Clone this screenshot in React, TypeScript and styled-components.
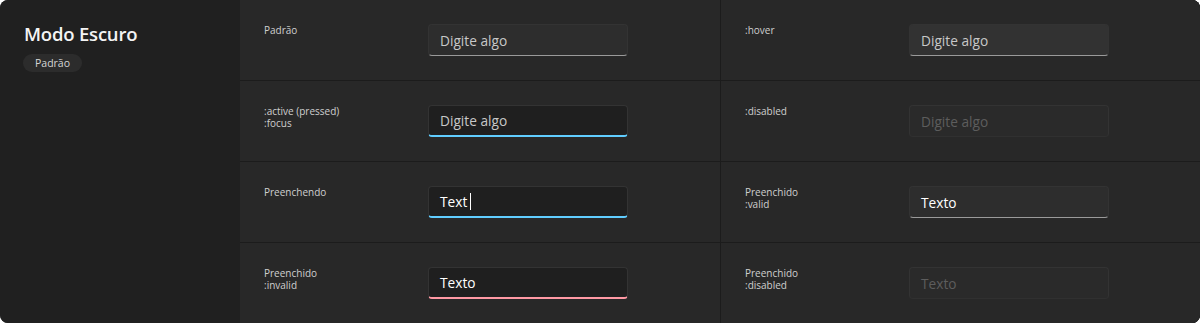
import React from 'react';
import styled, { createGlobalStyle, css } from 'styled-components';

type FieldState = 'rest' | 'hover' | 'focus' | 'disabled' | 'invalid' | 'valid';

interface Cell {
  label: string[];
  state: FieldState;
  value?: string;
  caret?: boolean;
}

const rows: Cell[][] = [
  [
    { label: ['Padrão'], state: 'rest' },
    { label: [':hover'], state: 'hover' },
  ],
  [
    { label: [':active (pressed)', ':focus'], state: 'focus' },
    { label: [':disabled'], state: 'disabled' },
  ],
  [
    { label: ['Preenchendo'], state: 'focus', value: 'Text', caret: true },
    { label: ['Preenchido', ':valid'], state: 'valid', value: 'Texto' },
  ],
  [
    { label: ['Preenchido', ':invalid'], state: 'invalid', value: 'Texto' },
    { label: ['Preenchido', ':disabled'], state: 'disabled', value: 'Texto' },
  ],
];

const GlobalStyle = createGlobalStyle`
  html, body {
    margin: 0;
    padding: 0;
    background: #ffffff;
  }
  body {
    font-family: 'Open Sans', 'Noto Sans', sans-serif;
    -webkit-font-smoothing: antialiased;
  }
`;

const Frame = styled.section`
  display: grid;
  grid-template-columns: 240px 1fr;
  width: 1200px;
  height: 323px;
  border-radius: 8px;
  overflow: hidden;
  background: #282828;
`;

const Sidebar = styled.aside`
  display: flex;
  flex-direction: column;
  align-items: flex-start;
  gap: 8px;
  padding: 21px 24px;
  background: #202020;
`;

const Title = styled.h1`
  margin: 0;
  font-size: 18.5px;
  font-weight: 600;
  color: #f4f4f4;
  letter-spacing: -0.2px;
`;

const Badge = styled.span`
  display: inline-flex;
  align-items: center;
  height: 18px;
  margin-left: -1px;
  padding: 0 12px;
  border-radius: 9px;
  background: #2c2c2c;
  color: #d6d6d6;
  font-size: 10.5px;
`;

const Board = styled.div`
  display: grid;
  grid-template-rows: repeat(4, 80px);
  row-gap: 1px;
  background: #1c1c1c;
`;

const Row = styled.div`
  display: grid;
  grid-template-columns: 480px 479px;
  column-gap: 1px;
  background: #1c1c1c;
`;

const Cell = styled.div`
  display: grid;
  grid-template-columns: 164px 200px;
  align-items: start;
  padding: 24px;
  background: #282828;
`;

const Label = styled.div`
  font-size: 10px;
  line-height: 12px;
  color: #cfcfcf;
`;

const fieldStyles: Record<FieldState, ReturnType<typeof css>> = {
  rest: css`
    background: #2d2d2d;
    border-bottom: 1px solid #9a9a9a;
  `,
  hover: css`
    background: #323232;
    border-bottom: 1px solid #9a9a9a;
  `,
  valid: css`
    background: #2d2d2d;
    border-bottom: 1px solid #9a9a9a;
  `,
  focus: css`
    background: #1f1f1f;
    border-bottom: 2px solid #60cdff;
  `,
  invalid: css`
    background: #1f1f1f;
    border-bottom: 2px solid #ff99a4;
  `,
  disabled: css`
    background: #2a2a2a;
    border-bottom: 1px solid #303030;
  `,
};

const Field = styled.div<{ $state: FieldState; $filled: boolean }>`
  box-sizing: border-box;
  display: flex;
  align-items: center;
  height: 32px;
  padding: 0 11px;
  border: 1px solid #333333;
  border-radius: 4px;
  font-size: 13.7px;
  color: ${(p) =>
    p.$state === 'disabled' ? '#5d5d5d' : p.$filled ? '#ffffff' : '#c8c8c8'};
  ${(p) => fieldStyles[p.$state]}
`;

const Caret = styled.span`
  display: inline-block;
  width: 1px;
  height: 17px;
  margin-left: 3px;
  background: #ffffff;
`;

export default function App() {
  return (
    <>
      <GlobalStyle />
      <Frame>
        <Sidebar>
          <Title>Modo Escuro</Title>
          <Badge>Padrão</Badge>
        </Sidebar>
        <Board>
          {rows.map((row, i) => (
            <Row key={i}>
              {row.map((cell, j) => (
                <Cell key={j}>
                  <Label>
                    {cell.label.map((line) => (
                      <div key={line}>{line}</div>
                    ))}
                  </Label>
                  <Field $state={cell.state} $filled={!!cell.value}>
                    {cell.value ?? 'Digite algo'}
                    {cell.caret && <Caret />}
                  </Field>
                </Cell>
              ))}
            </Row>
          ))}
        </Board>
      </Frame>
    </>
  );
}
